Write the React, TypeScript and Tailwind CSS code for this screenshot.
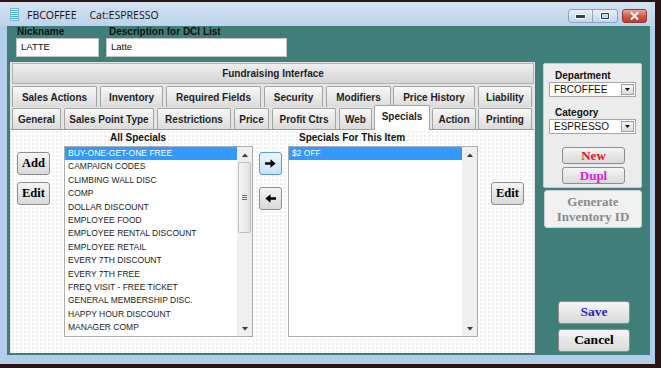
import React from "react";

const sans = "font-['Liberation_Sans',Arial,sans-serif]";
const serif = "font-['Liberation_Serif','Times_New_Roman',serif]";

const tabs2: [string, string][] = [
  ["Sales Actions", "w-[85px]"],
  ["Inventory", "w-[63px] ml-[3px]"],
  ["Required Fields", "w-[95px] ml-[3px]"],
  ["Security", "w-[59px] ml-[3px]"],
  ["Modifiers", "w-[65px] ml-[3px]"],
  ["Price History", "w-[82px] ml-[2px]"],
  ["Liability", "w-[54px] ml-[3px]"],
];

const tabs3: [string, string][] = [
  ["General", "w-[49px]"],
  ["Sales Point Type", "w-[90px] ml-[3px]"],
  ["Restrictions", "w-[74px] ml-[3px]"],
  ["Price", "w-[35px] ml-[3px]"],
  ["Profit Ctrs", "w-[64px] ml-[3px]"],
  ["Web", "w-[33px] ml-[3px]"],
  ["Specials", "w-[56px] ml-[2px]"],
  ["Action", "w-[44px] ml-[2px]"],
  ["Printing", "w-[54px] ml-[2px]"],
];

const allSpecials = [
  "BUY-ONE-GET-ONE FREE",
  "CAMPAIGN CODES",
  "CLIMBING WALL DISC",
  "COMP",
  "DOLLAR DISCOUNT",
  "EMPLOYEE FOOD",
  "EMPLOYEE RENTAL DISCOUNT",
  "EMPLOYEE RETAIL",
  "EVERY 7TH DISCOUNT",
  "EVERY 7TH FREE",
  "FREQ VISIT - FREE TICKET",
  "GENERAL MEMBERSHIP DISC.",
  "HAPPY HOUR DISCOUNT",
  "MANAGER COMP",
];

const tabBase =
  "h-[21px] flex items-center justify-center border border-b-0 border-[#a3a3a3] rounded-t-[2px] bg-linear-to-b from-[#f8f8f8] to-[#dbdbdb] text-[10px] font-bold text-[#1e1e1e] whitespace-nowrap";

const btnBase =
  "flex items-center justify-center rounded-[3px] border border-[#8c8d8d] bg-linear-to-b from-[#f5f5f5] to-[#d9d9d9] font-bold";

function UpTri() {
  return (
    <svg width="6" height="4" viewBox="0 0 6 4">
      <path d="M0 4L3 0.5L6 4z" fill="#3a3a3a" />
    </svg>
  );
}
function DownTri() {
  return (
    <svg width="6" height="4" viewBox="0 0 6 4">
      <path d="M0 0L3 3.5L6 0z" fill="#3a3a3a" />
    </svg>
  );
}

function ListBox({
  items,
  width,
  thumb,
}: {
  items: string[];
  width: string;
  thumb: boolean;
}) {
  return (
    <div className={`${width} h-[191px] border border-[#abadb3] bg-white flex`}>
      <div className="flex-1 flex flex-col overflow-hidden">
        {items.map((it, i) => (
          <div
            key={it}
            className={`h-[13.4px] leading-[13.4px] pl-[3px] text-[8.5px] whitespace-nowrap ${
              i === 0 ? "bg-[#3399ff] text-white" : "text-[#1a1a1a]"
            }`}
          >
            {it}
          </div>
        ))}
      </div>
      <div className="w-[15px] bg-[#efefef] flex flex-col">
        <div className="h-[15px] flex items-center justify-center">
          <UpTri />
        </div>
        {thumb ? (
          <div className="mx-[1px] h-[71px] rounded-[2px] border border-[#bdbdbd] bg-linear-to-r from-[#f6f6f6] to-[#e2e2e2] flex flex-col items-center justify-center gap-[1px]">
            <div className="w-[5px] h-[1px] bg-[#6c6c6c]" />
            <div className="w-[5px] h-[1px] bg-[#6c6c6c]" />
            <div className="w-[5px] h-[1px] bg-[#6c6c6c]" />
          </div>
        ) : null}
        <div className="mt-auto h-[15px] flex items-center justify-center">
          <DownTri />
        </div>
      </div>
    </div>
  );
}

function Select({ value }: { value: string }) {
  return (
    <div className="ml-[5px] w-[87px] h-[15px] border border-[#a6a6a6] bg-white flex items-center">
      <span className="pl-[4px] text-[10px] leading-[13px] text-[#111]">{value}</span>
      <div className="ml-auto mr-[1px] w-[13px] h-[11px] border border-[#9d9d9d] bg-linear-to-b from-[#f7f7f7] to-[#dcdcdc] flex items-center justify-center">
        <svg width="5" height="3" viewBox="0 0 5 3">
          <path d="M0 0L2.5 3L5 0z" fill="#111" />
        </svg>
      </div>
    </div>
  );
}

export default function App() {
  return (
    <div className={`w-[661px] h-[368px] bg-[#2b1414] pt-[2px] pr-[6px] pb-[4px] flex ${sans}`}>
      <div className="flex-1 flex flex-col bg-[#b2cde8]">
        {/* Title bar */}
        <div className="h-[24px] flex items-start bg-linear-to-b from-[#d3e2f2] to-[#bdd3ea]">
          <div className="ml-[10px] mt-[6px]">
            <svg width="9" height="13" viewBox="0 0 9 13">
              <rect x="0.5" y="0.5" width="8" height="12" fill="#eef9fc" stroke="#7fb3cf" />
              <rect x="1" y="2" width="7" height="1" fill="#39b5d9" />
              <rect x="1" y="4" width="7" height="1" fill="#39b5d9" />
              <rect x="1" y="6" width="7" height="1" fill="#39b5d9" />
              <rect x="1" y="8" width="7" height="1" fill="#39b5d9" />
              <rect x="1" y="10" width="7" height="1" fill="#39b5d9" />
            </svg>
          </div>
          <div className="ml-[8px] mt-[6px] text-[10.5px] leading-[14px] text-[#1b1b1b] font-['Noto_Sans',sans-serif] whitespace-nowrap">
            FBCOFFEE<span className="ml-[13px]">Cat:ESPRESSO</span>
          </div>
          <div className="ml-auto mr-[8px] mt-[7px] flex">
            <div className="w-[25px] h-[14px] rounded-l-[3px] border border-[#8aa3c0] bg-linear-to-b from-[#e6eff8] to-[#c3d6eb] flex items-end justify-center pb-[3px]">
              <div className="w-[9px] h-[3px] bg-[#2f3f55] border border-white box-content" />
            </div>
            <div className="w-[25px] h-[14px] rounded-r-[3px] border border-l-0 border-[#8aa3c0] bg-linear-to-b from-[#e6eff8] to-[#c3d6eb] flex items-center justify-center">
              <div className="w-[8px] h-[6px] border border-[#2f3f55] bg-[#c9d8ea] outline outline-1 outline-white" />
            </div>
            <div className="ml-[4px] w-[25px] h-[14px] rounded-[3px] border border-[#8b3a33] bg-linear-to-b from-[#e9a89b] via-[#d3594c] to-[#c33b2f] flex items-center justify-center">
              <svg width="9" height="8" viewBox="0 0 9 8">
                <path d="M1 0.5L8 7.5M8 0.5L1 7.5" stroke="#ffffff" strokeWidth="2" />
              </svg>
            </div>
          </div>
        </div>

        {/* Body */}
        <div className="flex-1 ml-[7px] mr-[5px] mb-[9px] bg-[#3f7e79] flex flex-col">
          {/* top fields */}
          <div className="flex ml-[9px] gap-[7px]">
            <div className="w-[83px] flex flex-col">
              <div className="h-[12px] leading-[12px] pl-[1px] text-[10px] font-bold text-[#111]">Nickname</div>
              <div className="h-[19px] bg-white border border-[#c6c6c6] flex items-center pl-[4px] text-[9.5px] text-[#111]">
                LATTE
              </div>
            </div>
            <div className="w-[181px] flex flex-col">
              <div className="h-[12px] leading-[12px] pl-[3px] text-[10px] font-bold text-[#111]">
                Description for DCI List
              </div>
              <div className="h-[19px] bg-white border border-[#c6c6c6] flex items-center pl-[4px] text-[9.5px] text-[#111]">
                Latte
              </div>
            </div>
          </div>

          {/* main row */}
          <div className="flex mt-[5px] ml-[3px] h-[291px]">
            {/* tab panel */}
            <div className="w-[525px] h-full bg-[#e4e4e4] px-[1px] pt-[1px] flex flex-col">
              <div className="ml-[1px] w-[522px] h-[21px] flex items-center justify-center border border-[#b3b3b3] bg-linear-to-b from-[#efefef] to-[#d4d4d4] text-[10px] font-bold text-[#1e1e1e]">
                Fundraising Interface
              </div>
              <div className="flex ml-[1px] mt-[2px] h-[21px]">
                {tabs2.map(([label, cls]) => (
                  <div key={label} className={`${tabBase} ${cls}`}>
                    {label}
                  </div>
                ))}
              </div>
              <div className="flex items-start ml-[1px] mt-[1px] h-[21px] relative z-10">
                {tabs3.map(([label, cls]) =>
                  label === "Specials" ? (
                    <div
                      key={label}
                      className={`${cls} h-[25px] -mt-[3px] flex justify-center pt-[5px] leading-[12px] border border-b-0 border-[#a3a3a3] rounded-t-[2px] bg-white text-[10px] font-bold text-[#1e1e1e] whitespace-nowrap`}
                    >
                      {label}
                    </div>
                  ) : (
                    <div key={label} className={`${tabBase} ${cls}`}>
                      {label}
                    </div>
                  )
                )}
              </div>
              {/* content */}
              <div className="flex-1 border-t border-[#9c9c9c] bg-white bg-[radial-gradient(circle,#efefef_0.8px,transparent_1px)] bg-[length:4px_4px] pt-[1px] flex flex-col">
                <div className="flex h-[13px] leading-[13px] text-[10px] font-bold text-[#111]">
                  <div className="w-[288px] pl-[99px]">All Specials</div>
                  <div>Specials For This Item</div>
                </div>
                <div className="flex items-start mt-[2px]">
                  <div className="ml-[6px] w-[33px] mt-[6px] flex flex-col gap-[7px]">
                    <div className={`${btnBase} h-[23px] ${serif} text-[12.5px] text-black`}>Add</div>
                    <div className={`${btnBase} h-[23px] ${serif} text-[12.5px] text-black`}>Edit</div>
                  </div>
                  <div className="ml-[14px]">
                    <ListBox items={allSpecials} width="w-[189px]" thumb />
                  </div>
                  <div className="ml-[6px] w-[23px] mt-[6px] flex flex-col gap-[12px]">
                    <div className="h-[23px] rounded-[3px] border border-[#5b9bd5] bg-linear-to-b from-[#eaf5fd] to-[#c7e3f8] flex items-center justify-center">
                      <svg width="11" height="9" viewBox="0 0 11 9">
                        <path d="M0 3.2H5.5V0.2L10.6 4.5L5.5 8.8V5.8H0z" fill="#000" />
                      </svg>
                    </div>
                    <div className={`${btnBase} h-[23px]`}>
                      <svg width="11" height="9" viewBox="0 0 11 9">
                        <path d="M11 3.2H5.5V0.2L0.4 4.5L5.5 8.8V5.8H11z" fill="#000" />
                      </svg>
                    </div>
                  </div>
                  <div className="ml-[6px]">
                    <ListBox items={["$2 OFF"]} width="w-[190px]" thumb={false} />
                  </div>
                  <div className={`ml-[13px] mt-[36px] w-[33px] h-[23px] ${btnBase} ${serif} text-[12.5px] text-black`}>
                    Edit
                  </div>
                </div>
              </div>
            </div>

            {/* right column */}
            <div className="ml-[8px] mt-[1px] w-[99px] flex flex-col">
              <div className="h-[125px] bg-[#ececec] border border-[#c8c8c8] rounded-[2px] flex flex-col">
                <div className="mt-[6px] pl-[11px] h-[12px] leading-[12px] text-[10px] font-bold text-[#111]">
                  Department
                </div>
                <Select value="FBCOFFEE" />
                <div className="mt-[10px] pl-[11px] h-[12px] leading-[12px] text-[10px] font-bold text-[#111]">
                  Category
                </div>
                <Select value="ESPRESSO" />
                <div className={`mt-[13px] ml-[18px] w-[63px] h-[17px] ${btnBase} ${serif} text-[13px] text-[#e8141c]`}>
                  New
                </div>
                <div className={`mt-[3px] ml-[18px] w-[63px] h-[17px] ${btnBase} ${serif} text-[13px] text-[#dc1fdc]`}>
                  Dupl
                </div>
              </div>
              <div className={`mt-[2px] ml-[1px] w-[98px] h-[38px] bg-[#f1f1f1] border border-[#cfcfcf] rounded-[3px] flex flex-col items-center justify-center ${serif} font-bold text-[13px] leading-[15px] text-[#8a8a8a]`}>
                <div>Generate</div>
                <div>Inventory ID</div>
              </div>
              <div className={`mt-auto ml-[15px] w-[72px] h-[23px] ${btnBase} ${serif} text-[13.5px] text-[#1d22d4]`}>
                Save
              </div>
              <div className={`mt-[5px] mb-[1px] ml-[15px] w-[72px] h-[23px] ${btnBase} ${serif} text-[13.5px] text-black`}>
                Cancel
              </div>
            </div>
          </div>
        </div>
      </div>
    </div>
  );
}
